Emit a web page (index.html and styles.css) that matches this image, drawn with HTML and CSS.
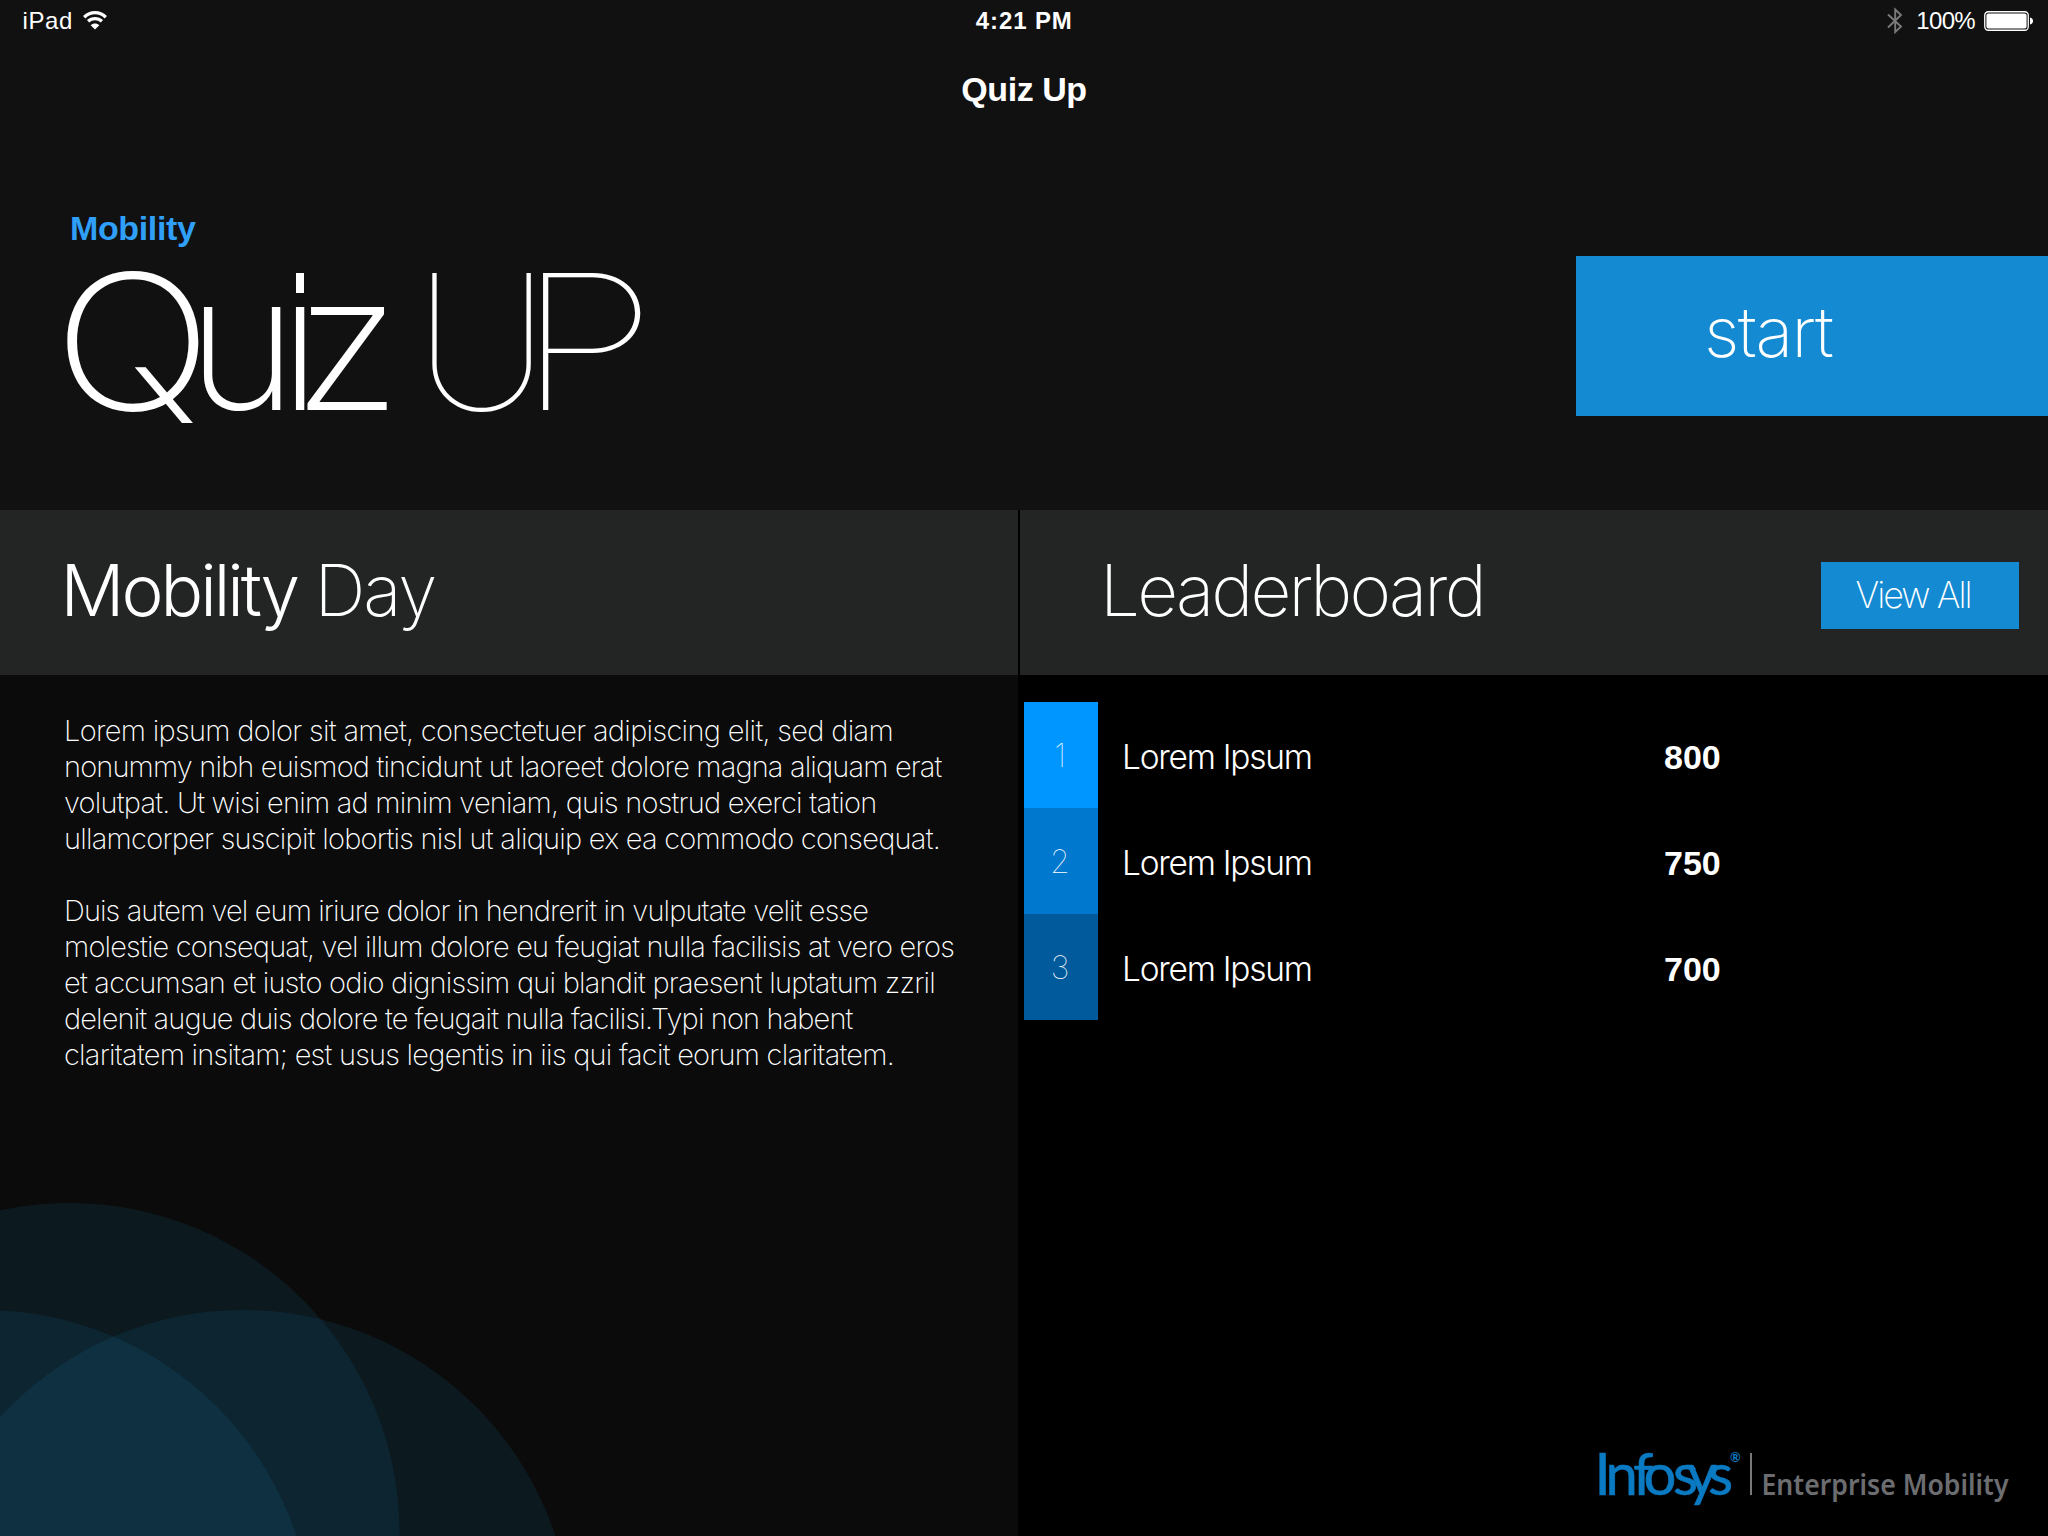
FILE: index.html
```html
<!DOCTYPE html>
<html lang="en">
<head>
<meta charset="utf-8">
<title>Quiz Up</title>
<link rel="stylesheet" href="styles.css">
</head>
<body>
<div class="screen">
  <header class="status">
    <div class="status-left">
      <span class="status-text">iPad</span>
      <svg class="wifi" width="24" height="19" viewBox="0 0 24 19" fill="none" stroke="#fff" stroke-width="3.3">
        <path d="M1.2 6.2C7.5 .2 16.500 .2 22.800 6.200"/>
        <path d="M5.100 10.300C9 6.700 15 6.700 18.900 10.300"/>
        <path d="M12 18.600L7.700 14.200C10.200 11.900 13.800 11.900 16.300 14.200Z" fill="#fff" stroke="none"/>
      </svg>
    </div>
    <div class="status-time">4:21 PM</div>
    <div class="status-right">
      <svg class="bluetooth" width="16" height="28" viewBox="0 0 16 28" fill="none" stroke="#7a7a7a" stroke-width="1.9">
        <path d="M1 7.500L14 19.500L8.200 25V2.500L14 8L1 20.500"/>
      </svg>
      <span class="status-text battery-label">100%</span>
      <svg class="battery" width="49" height="20" viewBox="0 0 49 20">
        <rect x=".75" y=".75" width="43.500" height="18.500" rx="3.500" fill="none" stroke="#fff" stroke-width="1.300"/>
        <rect x="2.400" y="2.400" width="40.200" height="15.200" rx="2" fill="#fff"/>
        <path d="M46 6.500C50 7 50 13 46 13.500Z" fill="#fff"/>
      </svg>
    </div>
  </header>
  <div class="nav-title">Quiz Up</div>

  <section class="hero">
    <div class="hero-text">
      <div class="eyebrow">Mobility</div>
      <h1 class="title"><span class="q">Q</span><span class="u">u</span><span class="i"><span class="stem">i</span></span><span class="z">z</span><span class="cap-u">U</span><span class="cap-p">P</span></h1>
    </div>
    <a class="start">start</a>
  </section>

  <main class="panels">
    <section class="panel about">
      <h2 class="panel-head"><span class="strong">Mobility</span><span class="thin">Day</span></h2>
      <div class="copy">
        <p>
          <span data-width="829">Lorem ipsum dolor sit amet, consectetuer adipiscing elit, sed diam</span>
          <span data-width="877.5">nonummy nibh euismod tincidunt ut laoreet dolore magna aliquam erat</span>
          <span data-width="812.5">volutpat. Ut wisi enim ad minim veniam, quis nostrud exerci tation</span>
          <span data-width="876">ullamcorper suscipit lobortis nisl ut aliquip ex ea commodo consequat.</span>
        </p>
        <p>
          <span data-width="804">Duis autem vel eum iriure dolor in hendrerit in vulputate velit esse</span>
          <span data-width="890">molestie consequat, vel illum dolore eu feugiat nulla facilisis at vero eros</span>
          <span data-width="871">et accumsan et iusto odio dignissim qui blandit praesent luptatum zzril</span>
          <span data-width="788.5">delenit augue duis dolore te feugait nulla facilisi.Typi non habent</span>
          <span data-width="830">claritatem insitam; est usus legentis in iis qui facit eorum claritatem.</span>
        </p>
      </div>
      <svg class="circles" width="600" height="346" viewBox="0 1190 600 346">
        <circle cx="69.500" cy="1533" r="330"/>
        <circle cx="243" cy="1639" r="329"/>
        <circle cx="-16" cy="1639" r="329"/>
      </svg>
    </section>

    <section class="panel board">
      <div class="panel-head">
        <h2 class="board-title">Leaderboard</h2>
        <a class="view-all">View All</a>
      </div>
      <ol class="ranks">
        <li><span class="rank r1">1</span><span class="name">Lorem Ipsum</span><b class="score">800</b></li>
        <li><span class="rank r2">2</span><span class="name">Lorem Ipsum</span><b class="score">750</b></li>
        <li><span class="rank r3">3</span><span class="name">Lorem Ipsum</span><b class="score">700</b></li>
      </ol>
      <footer class="brand">
        <svg width="440" height="91" viewBox="1594 1445 440 91">
          <text class="brand-name" y="1495" x="1594.500 1605.500 1633 1643.500 1673 1687 1708">Infosys</text>
          <text class="brand-mark" x="1730" y="1462">®</text>
          <rect x="1750" y="1453" width="2" height="42" fill="#77787a"/>
          <text class="brand-unit" x="1761.500" y="1495" textLength="247" lengthAdjust="spacingAndGlyphs">Enterprise Mobility</text>
        </svg>
      </footer>
    </section>
  </main>
</div>
<script src="lines.js"></script>
</body>
</html>
```
FILE: styles.css
```css
* { box-sizing: border-box; }
body { margin: 0; background: #111; color: #fff; font-family: Inter, "Liberation Sans", sans-serif; }
h1, h2, p, ol { margin: 0; padding: 0; font-weight: inherit; }

.screen { width: 2048px; height: 1536px; display: flex; flex-direction: column; overflow: hidden; background: #111; }

.status { height: 41px; display: grid; grid-template-columns: 1fr auto 1fr; padding: 0 15px 0 22.5px; line-height: 41px; font-family: "Liberation Sans", sans-serif; font-size: 24px; }
.status-left { display: flex; gap: 10.5px; letter-spacing: 0.6px; }
.wifi { margin-top: 10.5px; }
.status-time { font-weight: bold; letter-spacing: 0.88px; margin-left: -7px; }
.status-right { display: flex; justify-content: flex-end; }
.bluetooth { margin-top: 7px; margin-right: 13px; }
.battery { margin-top: 10.5px; }
.battery-label { letter-spacing: -0.68px; margin-right: 9px; }

.nav-title { height: 96px; text-align: center; font: bold 34px/96px "Liberation Sans", sans-serif; letter-spacing: -0.44px; }

.hero { height: 373px; display: flex; justify-content: space-between; }
.hero-text { padding-top: 71px; }
.eyebrow { padding-left: 70px; font: bold 34px/40px "Liberation Sans", sans-serif; letter-spacing: -0.36px; color: #2f9ff8; }
.title { display: flex; padding-left: 53px; font-size: 188px; line-height: 188px; font-weight: 240; }
.title > span { transform-origin: 0 0; }
.q { width: 134px; transform: scaleX(1.128); }
.u { width: 92px; }
.i { width: 14px; position: relative; }
/* the stem keeps its lower part; the tittle is drawn square */
.stem { display: block; width: 60px; clip-path: inset(55px 0 0 0); }
.i::before { content: ""; position: absolute; left: 16.5px; top: 25px; width: 8px; height: 20px; background: #fff; }
.z { width: 121px; transform: scaleX(1.08); }
.cap-u { width: 103px; font-weight: 100; }
.cap-p { width: 130px; font-weight: 100; transform: scaleX(1.225); }
.start { width: 472px; height: 160px; margin-top: 119px; padding-left: 128px; background: #138ad2; font-size: 70px; font-weight: 200; line-height: 151px; letter-spacing: -1.61px; }

.panels { flex: 1; display: grid; grid-template-columns: 1018px 1028px; column-gap: 2px; background: #000; }
.panel { display: flex; flex-direction: column; position: relative; }
.panel-head { height: 165px; display: flex; background: #232524; font-size: 71px; line-height: 160px; }
.about { background: #0b0b0b; }
.about .panel-head { padding-left: 60.5px; }
.strong { width: 254px; font-weight: 300; letter-spacing: -3.02px; }
.thin { font-weight: 150; letter-spacing: -2px; }
.copy { padding: 38px 0 0 64px; font-size: 29px; line-height: 36px; font-weight: 200; white-space: nowrap; }
.copy p + p { margin-top: 36px; }
.copy span { display: table; }
.circles { position: absolute; left: 0; bottom: 0; fill: rgb(22, 125, 175); fill-opacity: 0.125; }

.board-title { padding-left: 80px; font-size: 71px; font-weight: 200; letter-spacing: -2.82px; }
.view-all { width: 198px; height: 67px; margin: 52px 29px 0 auto; padding-left: 34.5px; background: #138ad2; font-size: 36px; font-weight: 200; line-height: 66px; letter-spacing: -1.98px; }
.ranks { list-style: none; padding: 27px 0 0 4px; }
.ranks li { display: flex; height: 106px; line-height: 111px; }
.rank { width: 74px; padding-right: 2px; text-align: center; font-size: 32px; font-weight: 100; line-height: 107px; }
.r1 { background: #0096ff; }
.r2 { background: #0078cd; }
.r3 { background: #005a9b; }
.name { width: 542px; margin-left: 24px; font-size: 33.5px; font-weight: 300; letter-spacing: -1.25px; }
.score { font: bold 34px/110px "Liberation Sans", sans-serif; }

.brand { margin-top: auto; height: 91px; padding-left: 574px; }
.brand svg { display: block; overflow: visible; }
.brand-name { font: 400 58px Lato, sans-serif; fill: #0a7ac2; stroke: #0a7ac2; stroke-width: 0.6px; }
.brand-mark { font: 700 13px Lato, sans-serif; fill: #0a7ac2; }
.brand-unit { font: 600 29.5px "Noto Sans", sans-serif; fill: #6c6d70; }
```
FILE: lines.js
```js
// Tracks each line of the copy so that it sets to its own measure.
document.querySelectorAll('.copy span').forEach(function (line) {
  line.style.letterSpacing = '0px';
  var natural = line.getBoundingClientRect().width;
  var gap = (parseFloat(line.dataset.width) - natural) / line.textContent.length;
  line.style.letterSpacing = gap.toFixed(3) + 'px';
});
```
